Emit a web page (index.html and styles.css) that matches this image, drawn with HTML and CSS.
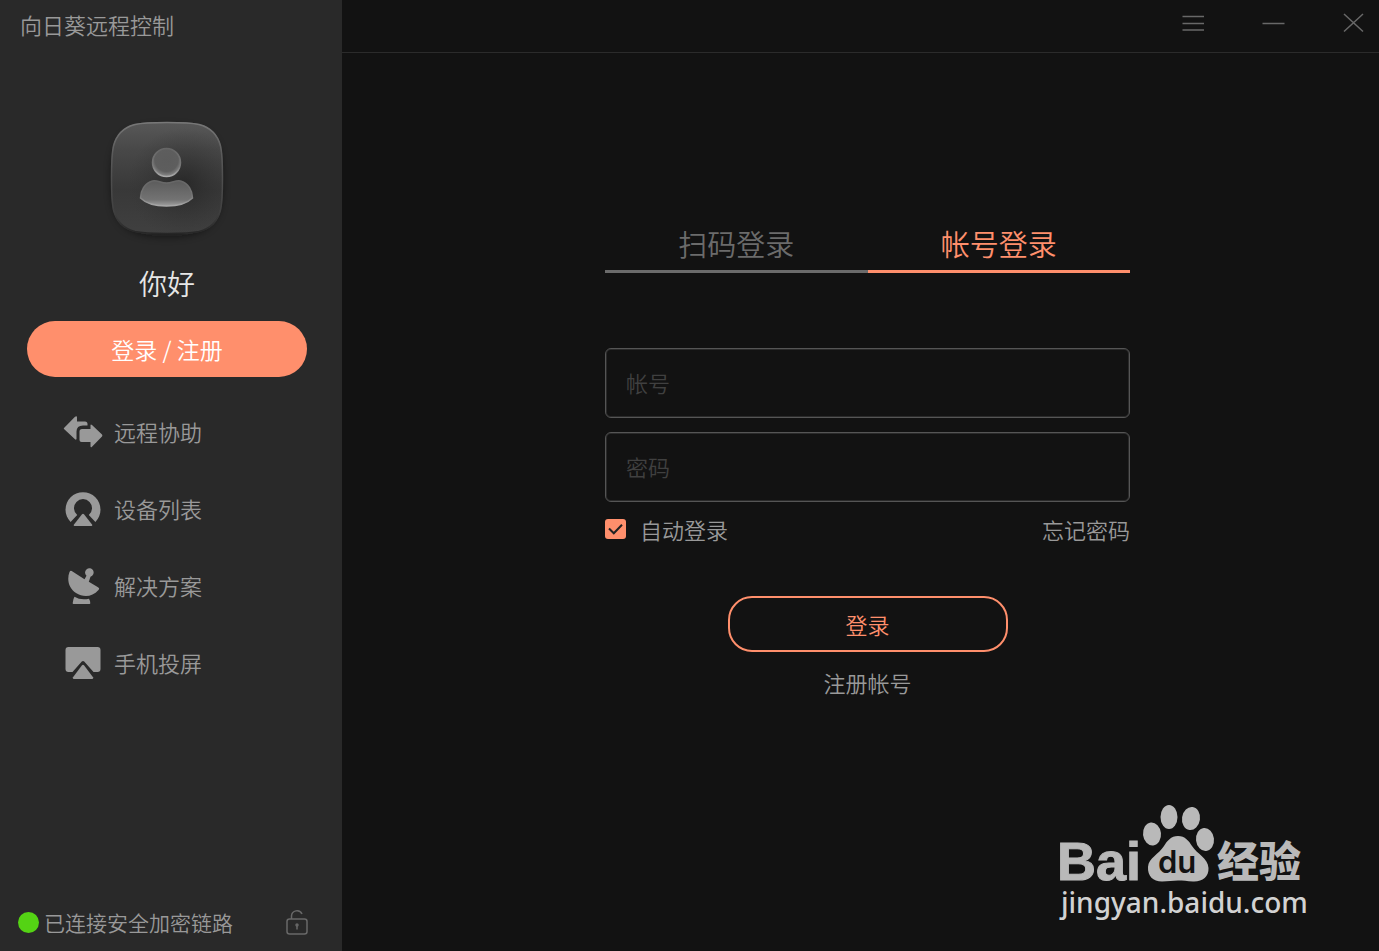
FILE: index.html
```
<!DOCTYPE html>
<html lang="zh-CN">
<head>
<meta charset="utf-8">
<meta name="viewport" content="width=device-width, initial-scale=1">
<title>向日葵远程控制</title>
<link rel="stylesheet" href="styles.css">
</head>
<body>
<div class="app">
  <aside class="sidebar">
    <h1 class="brand">向日葵远程控制</h1>
    <div class="profile">
      <svg class="avatar" viewBox="0 0 128 136" aria-hidden="true">
        <defs>
          <linearGradient id="tile" x1="0" y1="0" x2="0" y2="1">
            <stop offset="0" stop-color="#585858"/><stop offset=".25" stop-color="#484848"/><stop offset=".6" stop-color="#383838"/><stop offset="1" stop-color="#404040"/>
          </linearGradient>
          <radialGradient id="shade" cx=".65" cy=".55" r=".5">
            <stop offset="0" stop-color="#222" stop-opacity=".75"/><stop offset="1" stop-color="#333" stop-opacity="0"/>
          </radialGradient>
          <linearGradient id="rim" x1="0" y1="0" x2="0" y2="1">
            <stop offset="0" stop-color="#787878"/><stop offset=".3" stop-color="#595959"/><stop offset=".8" stop-color="#404040"/><stop offset="1" stop-color="#262626"/>
          </linearGradient>
          <linearGradient id="edge" x1="0" y1="0" x2="0" y2="1">
            <stop offset="0" stop-color="#666"/><stop offset=".6" stop-color="#777"/><stop offset="1" stop-color="#aaa"/>
          </linearGradient>
          <radialGradient id="head" cx=".5" cy=".4" r=".6">
            <stop offset="0" stop-color="#5c5c5c"/><stop offset=".7" stop-color="#5e5e5e"/><stop offset="1" stop-color="#8c8c8c"/>
          </radialGradient>
          <linearGradient id="torso" x1="0" y1="0" x2="0" y2="1">
            <stop offset="0" stop-color="#5c5c5c"/><stop offset=".75" stop-color="#737373"/><stop offset="1" stop-color="#a0a0a0"/>
          </linearGradient>
          <filter id="drop" x="-20%" y="-20%" width="140%" height="140%"><feGaussianBlur stdDeviation="4"/></filter>
        </defs>
        <path d="M64 14C105 14 119 23 119 67S105 123 64 123 9 111 9 67 23 14 64 14Z" fill="#111" opacity=".6" filter="url(#drop)"/>
        <path d="M64 9C76 9 87 9 96 11C108 14 115 21 118 33C120 42 120 53 120 65S120 88 118 97C115 109 108 116 96 119C87 121 76 121 64 121S41 121 32 119C20 116 13 109 10 97C8 88 8 77 8 65S8 42 10 33C13 21 20 14 32 11C41 9 52 9 64 9Z" fill="url(#tile)"/>
        <path d="M64 9.500C76 9.500 87 9.500 96 11.500C107.500 14.500 114.500 21.500 117.500 33C119.500 42 119.500 53 119.500 65S119.500 88 117.500 97C114.500 108.500 107.500 115.500 96 118.500C87 120.500 76 120.500 64 120.500S41 120.500 32 118.500C20.500 115.500 13.500 108.500 10.500 97C8.500 88 8.500 77 8.500 65S8.500 42 10.500 33C13.500 21.500 20.500 14.500 32 11.500C41 9.500 52 9.500 64 9.500Z" fill="url(#shade)" stroke="url(#rim)" stroke-width="1.500"/>
        <circle cx="63.500" cy="49.500" r="14" fill="url(#head)" stroke="url(#edge)" stroke-width="1.500"/>
        <path d="M49.500 68C54.500 67 57.500 70 63.500 70S72.500 67 77.500 68C85.500 70 89.500 78 89.500 85C83.500 91 74.500 93 63.500 93S43.500 91 37.500 85C37.500 78 41.500 70 49.500 68Z" fill="url(#torso)" stroke="url(#edge)" stroke-width="1.500"/>
      </svg>
      <p class="greeting">你好</p>
      <button class="signin" type="button">登录 / 注册</button>
    </div>
    <nav class="menu">
      <a class="menu-item" href="#assist">
        <svg class="menu-icon" viewBox="0 0 40 38" aria-hidden="true"><path d="M1 15L12 3.800Q14 2.200 14 4.500V8.500H22Q24.500 8.500 24.500 11V12.500H20Q13.500 12.500 13.500 18.500V26Q13 27.200 12 26.200L1 16Q.5 15.500 1 15Z"/><path d="M16.500 18.500Q16.500 16 19 16H27.500V12.500Q27.500 10.800 29 12L39 21.600Q39.800 22.500 39 23.400L29 33.700Q27.500 35 27.500 33V29H18.500Q16.500 29 16.500 27Z"/></svg>
        <span>远程协助</span>
      </a>
      <a class="menu-item" href="#devices">
        <svg class="menu-icon" viewBox="0 0 40 38" aria-hidden="true"><path d="M7.600 32A17.500 17.500 0 1 1 32.400 32L25.800 25A9 9 0 1 0 14.200 25Z"/><path d="M19 24.200Q20 23.200 21 24.200L29 34.500Q29.800 36 28.500 36H11.500Q10.200 36 11 34.500Z"/></svg>
        <span>设备列表</span>
      </a>
      <a class="menu-item" href="#solutions">
        <svg class="menu-icon" viewBox="0 0 40 38" aria-hidden="true"><path d="M6.500 5Q7.500 3 9.500 4.500L21.500 12.200L23.500 8.800A4.300 4.300 0 1 1 27.500 9.700L25.800 14.800L35 20.200Q37 21.200 35.500 23C29 30.500 20 30.500 13 26C6 21.500 3.500 13 6.500 5Z"/><path d="M11.500 29.800Q17.500 33.500 26 31.800Q27.300 34 27.300 36.200Q27.300 37 26.500 37H10.500Q9.500 37 9.700 36Q10 32 11.500 29.800Z"/></svg>
        <span>解决方案</span>
      </a>
      <a class="menu-item" href="#cast">
        <svg class="menu-icon" viewBox="0 0 40 38" aria-hidden="true"><path d="M5.500 3H34.500Q37.500 3 37.500 6V25Q37.500 28 34.500 28H30.500L21.200 17.600Q20 16.500 18.800 17.600L9.500 28H5.500Q2.500 28 2.500 25V6Q2.500 3 5.500 3Z"/><path d="M19 21.200Q20 20.200 21 21.200L30 33.300Q30.700 35 29.200 35H10.800Q9.300 35 10 33.300Z"/></svg>
        <span>手机投屏</span>
      </a>
    </nav>
    <footer class="status">
      <span class="dot"></span>
      <span>已连接安全加密链路</span>
      <svg class="lock" viewBox="0 0 24 26" aria-hidden="true"><rect x="2" y="10" width="20" height="15" rx="2.500"/><path d="M6.500 10V7A5.500 5.500 0 0 1 17 5"/><path d="M12 16.500V20.500"/><circle cx="12" cy="16" r="1"/></svg>
    </footer>
  </aside>
  <main class="main">
    <header class="titlebar">
      <button class="win" type="button" aria-label="菜单"><svg viewBox="0 0 24 24"><path d="M1.500 5.500H23M1.500 12.500H23M1.500 19H23"/></svg></button>
      <button class="win" type="button" aria-label="最小化"><svg viewBox="0 0 24 24"><path d="M1.500 12.500H23.500"/></svg></button>
      <button class="win" type="button" aria-label="关闭"><svg viewBox="0 0 24 24"><path d="M3 3L22 20.500M22 3L3 20.500"/></svg></button>
    </header>
    <form class="login">
      <div class="tabs" role="tablist">
        <button class="tab" type="button" role="tab" aria-selected="false">扫码登录</button>
        <button class="tab tab-active" type="button" role="tab" aria-selected="true">帐号登录</button>
      </div>
      <div class="fields">
        <input class="field" type="text" placeholder="帐号" aria-label="帐号">
        <input class="field" type="password" placeholder="密码" aria-label="密码">
      </div>
      <div class="options">
        <label class="auto">
          <span class="check">
            <input class="check-input" type="checkbox" checked>
            <svg class="check-mark" viewBox="0 0 21 20" aria-hidden="true"><path d="M4 9.500L8.800 14.300L17 5.800"/></svg>
          </span>
          自动登录
        </label>
        <a class="link" href="#forgot">忘记密码</a>
      </div>
      <button class="submit" type="submit">登录</button>
      <a class="link register" href="#register">注册帐号</a>
    </form>
  </main>
  <div class="watermark">
    <svg class="watermark-art" viewBox="0 0 256 124" role="img" aria-label="Baidu 经验">
      <g fill="#b9b9b9">
        <text class="wm-bai" x="2" y="80">Bai</text>
        <ellipse cx="97" cy="34" rx="9" ry="11.500" transform="rotate(-6 97 34)"/>
        <ellipse cx="114" cy="17" rx="8.500" ry="12"/>
        <ellipse cx="136" cy="18.500" rx="9" ry="11.500" transform="rotate(8 136 18.500)"/>
        <ellipse cx="150" cy="39.500" rx="9" ry="11.500" transform="rotate(-6 150 39.500)"/>
        <path d="M123 36C130 36 134 41 137 46C142 54 153 58 153.500 68C154 77 147 82 138 81.500C132 81 128 80.500 123 80.500S113 81.500 107 81.500C98 81.500 92.500 76 93 67C93.500 58 104 54 109 46C112 41 116 36 123 36Z"/>
        <text class="wm-cn" x="162" y="77">经验</text>
        <text class="wm-url" x="6" y="113">jingyan.baidu.com</text>
      </g>
      <text class="wm-du" x="103" y="73">du</text>
    </svg>
  </div>
</div>
</body>
</html>
```

FILE: styles.css
```
* {
  box-sizing: border-box;
}

body {
  margin: 0;
  background: #121212;
  color: #999;
  font-family: "Noto Sans CJK SC", sans-serif;
  font-size: 22px;
  font-weight: 350;
  line-height: 32px;
}

button,
input {
  font: inherit;
  color: inherit;
}

button {
  padding: 0;
  border: 0;
  background: none;
  cursor: pointer;
}

a {
  color: inherit;
  text-decoration: none;
}

.app {
  display: flex;
  min-height: 100vh;
}

.sidebar {
  display: flex;
  flex: 0 0 342px;
  flex-direction: column;
  background: #292929;
}

.brand {
  margin: 0;
  padding: 8px 20px 12px;
  font-size: 22px;
  font-weight: 350;
}

.profile {
  display: flex;
  flex-direction: column;
  align-items: center;
  padding: 61px 35px 0 27px;
}

.avatar {
  width: 128px;
  height: 136px;
}

.greeting {
  margin: 12px 0 16px;
  color: #e6e6e6;
  font-size: 28px;
  line-height: 44px;
}

.signin {
  width: 100%;
  height: 56px;
  border-radius: 28px;
  background: #ff8f6c;
  color: #fff;
  font-size: 23px;
}

.menu {
  display: flex;
  flex-direction: column;
  gap: 39px;
  padding: 36px 63px;
}

.menu-item {
  display: flex;
  align-items: center;
  gap: 11px;
  height: 38px;
}

.menu-item span {
  padding-bottom: 2px;
}

.menu-icon {
  width: 40px;
  height: 38px;
  fill: #999;
}

.status {
  display: flex;
  align-items: center;
  margin-top: auto;
  padding: 0 33px 13px 18px;
  font-size: 21px;
}

.dot {
  width: 21px;
  height: 21px;
  margin-right: 5px;
  border-radius: 50%;
  background: #54d314;
}

.lock {
  width: 24px;
  height: 26px;
  margin-left: auto;
  fill: none;
  stroke: #686868;
  stroke-width: 1.5;
}

.main {
  flex: 1;
}

.titlebar {
  display: flex;
  justify-content: flex-end;
  gap: 56px;
  padding: 11px 14px 17px;
  border-bottom: 1px solid #2b2b2b;
}

.win {
  width: 24px;
  height: 24px;
}

.win svg {
  display: block;
  fill: none;
  stroke: #686868;
  stroke-width: 1.5;
}

.login {
  display: flex;
  flex-direction: column;
  width: 539px;
  max-width: 100%;
  margin: 0 auto;
  padding: 167px 0 32px 14px;
}

.tabs {
  display: flex;
  margin-bottom: 75px;
  font-size: 29px;
  line-height: 44px;
}

.tab {
  flex: 1;
  height: 53px;
  padding-bottom: 4px;
  border-bottom: 3px solid #6b6b6b;
  color: #6b6b6b;
}

.tab-active {
  border-color: #ff8f6c;
  color: #ff8f6c;
}

.fields {
  display: grid;
  gap: 14px;
}

.field {
  width: 100%;
  height: 70px;
  padding: 0 20px 2px;
  border: 1px solid #555;
  border-radius: 6px;
  background: transparent;
  box-shadow: inset 0 0 0 1px #2a2a2a;
  outline: none;
}

.field::placeholder {
  color: #404040;
  opacity: 1;
}

.options {
  display: flex;
  align-items: center;
  justify-content: space-between;
  margin: 11px 0 51px;
}

.auto {
  display: flex;
  align-items: center;
  gap: 14px;
}

.check {
  display: grid;
}

.check-input,
.check-mark {
  grid-area: 1 / 1;
  width: 21px;
  height: 20px;
  margin: 0;
}

.check-input {
  appearance: none;
  border-radius: 3px;
  background: #ff8f6c;
}

.check-mark {
  fill: none;
  stroke: #222;
  stroke-width: 2;
  pointer-events: none;
}

.submit {
  align-self: center;
  width: 280px;
  height: 56px;
  border: 2px solid #ff8f6c;
  border-radius: 24px;
  color: #ff8f6c;
}

.register {
  align-self: center;
  margin-top: 14px;
}

.watermark {
  position: absolute;
  right: 68px;
  bottom: 27px;
}

.watermark-art {
  display: block;
  width: 256px;
  height: 124px;
}

.wm-bai {
  font: 700 54px "Liberation Sans", sans-serif;
  stroke: #b9b9b9;
  stroke-width: 1px;
}

.wm-cn {
  font: 900 42px "Noto Sans CJK SC", sans-serif;
}

.wm-url {
  font: 500 28px "Noto Sans", sans-serif;
  fill: #d2d2d2;
}

.wm-du {
  font: 600 31px Inter, sans-serif;
  fill: #121212;
}
```
